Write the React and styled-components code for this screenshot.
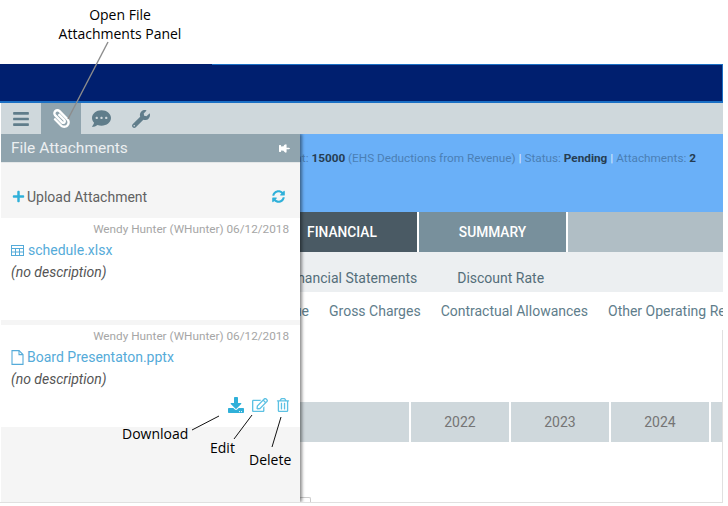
import React from 'react';
import styled, { createGlobalStyle } from 'styled-components';
import {
  FaBars,
  FaPaperclip,
  FaCommentDots,
  FaWrench,
  FaThumbtack,
  FaPlus,
  FaSyncAlt,
  FaDownload,
  FaRegEdit,
  FaRegTrashAlt,
} from 'react-icons/fa';

const GlobalStyle = createGlobalStyle`
  html, body {
    margin: 0;
    padding: 0;
    background: #fff;
    font-family: Roboto, "Liberation Sans", sans-serif;
  }
`;

const Page = styled.div`
  position: relative;
  width: 728px;
  height: 506px;
  overflow: hidden;
  padding-top: 64px;
  box-sizing: border-box;
`;

const Frame = styled.div`
  position: relative;
  width: 723px;
  height: 438px;
  border-bottom: 1px solid #e0e0e0;
  display: flex;
  flex-direction: column;
`;

const NavyBar = styled.div`
  height: 37px;
  flex: none;
  background: #001f6f;
  border-bottom: 2px solid #1a6fc4;
  border-right: 1px solid #1a6fc4;
  background-image: linear-gradient(#1a6fc4, #1a6fc4);
  background-size: 511px 1px;
  background-position: 212px 0;
  background-repeat: no-repeat;
`;

const Toolbar = styled.div`
  height: 31px;
  flex: none;
  display: flex;
  background: #cfd8dc;
  border-left: 1px solid #fff;
`;

const ToolButton = styled.div`
  width: 40px;
  display: flex;
  align-items: center;
  justify-content: center;
  font-size: ${(p) => p.$size || 18}px;
  color: ${(p) => (p.$active ? '#fff' : '#607d8b')};
  background: ${(p) => (p.$active ? '#90a4ae' : 'transparent')};
`;

const ClipIcon = styled(FaPaperclip)`
  transform: scaleX(-1);
`;

const InfoBand = styled.div`
  height: 78px;
  flex: none;
  background: #6ab0f8;
  display: flex;
  justify-content: flex-end;
  padding: 17px 27px 0 0;
  box-sizing: border-box;
  font-size: 11.75px;
  line-height: 14px;
  color: #4a7fb5;
`;

const Strong = styled.b`
  color: #263d52;
  font-weight: 700;
`;

const Pipe = styled.span`
  color: #cfe5fb;
  font-weight: 700;
  margin: 0 3px;
`;

const MainTabs = styled.div`
  height: 40px;
  flex: none;
  display: flex;
  background: #fff;
`;

const MainTab = styled.div`
  flex: ${(p) => (p.$width ? 'none' : '1')};
  width: ${(p) => (p.$width ? `${p.$width}px` : 'auto')};
  margin-right: ${(p) => p.$gap ?? 2}px;
  display: flex;
  align-items: center;
  justify-content: center;
  background: ${(p) => p.$bg};
  color: #fff;
  font-size: 13.75px;
  font-weight: 500;
`;

const SubTabs = styled.div`
  height: 40px;
  flex: none;
  display: flex;
  align-items: center;
  gap: 40px;
  padding: 12px 0 0 286px;
  background: #eceff1;
  color: #546e7a;
  font-size: 14px;
  white-space: nowrap;
  box-sizing: border-box;
`;

const SectionTabs = styled.div`
  height: 38px;
  flex: none;
  display: flex;
  gap: 20px;
  padding-top: 11px;
  box-sizing: border-box;
  color: #607d8b;
  font-size: 14px;
  line-height: 16px;
  white-space: nowrap;
  overflow: hidden;
`;

const EdgeTab = styled.span`
  flex: none;
  width: 309px;
  text-align: right;
`;

const Body = styled.div`
  flex: 1;
  border-right: 1px solid #e0e0e0;
  padding-top: 72px;
  min-height: 0;
`;

const YearRow = styled.div`
  display: flex;
  gap: 2px;
  height: 40px;
`;

const YearCell = styled.div`
  flex: ${(p) => (p.$grow ? '1' : 'none')};
  width: ${(p) => (p.$grow ? 'auto' : `${p.$width || 98}px`)};
  background: #cfd8dc;
  color: #757575;
  font-size: 14px;
  display: flex;
  align-items: center;
  justify-content: center;
`;

const CheckBox = styled.div`
  position: absolute;
  left: 299px;
  bottom: 0;
  width: 10px;
  height: 4px;
  border: 1px solid #ccc;
  border-bottom: none;
  border-radius: 2px 2px 0 0;
`;

const Panel = styled.aside`
  position: absolute;
  left: 0;
  top: 70px;
  bottom: 0;
  width: 299px;
  border-left: 1px solid #fff;
  background: #f5f5f5;
  box-shadow: 2px 0 3px rgba(0, 0, 0, 0.45);
  clip-path: inset(0 -6px 0 0);
  display: flex;
  flex-direction: column;
`;

const PanelHeader = styled.div`
  height: 29px;
  flex: none;
  background: #90a4ae;
  color: #eceff1;
  display: flex;
  align-items: center;
  justify-content: space-between;
  padding: 0 10px;
  box-sizing: border-box;
  font-size: 15.5px;
  border-bottom: 1px solid #e4e7e8;
`;

const PinIcon = styled(FaThumbtack)`
  transform: rotate(-90deg);
  font-size: 11px;
  color: #fff;
`;

const UploadRow = styled.div`
  height: 55px;
  flex: none;
  display: flex;
  align-items: center;
  justify-content: space-between;
  padding: 14px 15px 2px 11px;
  box-sizing: border-box;
  color: #616161;
  font-size: 14px;
`;

const UploadLabel = styled.span`
  display: flex;
  align-items: center;
  gap: 2px;
`;

const Accent = styled.span`
  display: inline-flex;
  color: ${(p) => (p.$light ? '#5cc1e3' : '#2fb0d9')};
  font-size: ${(p) => p.$size || 12}px;
`;

const AttachmentCard = styled.div`
  height: 102px;
  flex: none;
  margin-bottom: 5px;
  background: #fff;
  padding: 4px 11px 0 10px;
  box-sizing: border-box;
  position: relative;
`;

const CardMeta = styled.div`
  text-align: right;
  color: #a6a6a6;
  font-size: 11.75px;
  line-height: 15px;
`;

const FileLink = styled.div`
  display: flex;
  align-items: center;
  gap: ${(p) => p.$gap}px;
  margin-top: 3px;
  color: #55abd9;
  font-size: 14px;
  line-height: 20px;
`;

const Description = styled.div`
  margin-top: 2px;
  font-style: italic;
  color: #555;
  font-size: 14px;
  line-height: 20px;
`;

const CardActions = styled.div`
  position: absolute;
  right: 10px;
  bottom: 14px;
  display: flex;
  align-items: center;
  gap: 8px;
`;

const CalloutLines = styled.svg`
  position: absolute;
  left: 0;
  top: 0;
  pointer-events: none;
`;

const Callout = styled.div`
  position: absolute;
  left: ${(p) => p.$x}px;
  top: ${(p) => p.$y}px;
  width: ${(p) => p.$width || 'auto'};
  text-align: center;
  font-family: "Open Sans", "Noto Sans", sans-serif;
  font-size: 14px;
  line-height: 19px;
  color: #000;
  white-space: nowrap;
`;

const FileIcon = () => (
  <svg width="13" height="15" viewBox="0 0 13 15" fill="none" stroke="currentColor" strokeWidth="1.1">
    <path d="M1 .6h7l4 4v9.8H1z" />
    <path d="M8 .6v4h4" />
  </svg>
);

const TableIcon = () => (
  <svg width="13" height="11" viewBox="0 0 13 11" fill="none" stroke="currentColor">
    <rect x=".5" y=".5" width="12" height="10" />
    <path d="M.5 3.5h12M.5 7h12M4.5 3.5V10.5M8.5 3.5V10.5" />
  </svg>
);

export default function App() {
  return (
    <>
      <GlobalStyle />
      <Page>
        <Frame>
          <NavyBar />
          <Toolbar>
            <ToolButton $size={18}><FaBars /></ToolButton>
            <ToolButton $active $size={19}><ClipIcon /></ToolButton>
            <ToolButton $size={19}><FaCommentDots /></ToolButton>
            <ToolButton $size={18}><FaWrench /></ToolButton>
          </Toolbar>
          <InfoBand>
            <span>
              Amount: <Strong>15000</Strong> (EHS Deductions from Revenue)<Pipe>|</Pipe>Status: <Strong>Pending</Strong><Pipe>|</Pipe>Attachments: <Strong>2</Strong>
            </span>
          </InfoBand>
          <MainTabs>
            <MainTab $width={267} $gap={0} $bg="#4a5a64" />
            <MainTab $width={150} $bg="#4a5a64">FINANCIAL</MainTab>
            <MainTab $width={147} $bg="#78909c">SUMMARY</MainTab>
            <MainTab $gap={0} $bg="#b0bec5" />
          </MainTabs>
          <SubTabs>
            <span>Financial Statements</span>
            <span>Discount Rate</span>
          </SubTabs>
          <SectionTabs>
            <EdgeTab>Revenue</EdgeTab>
            <span>Gross Charges</span>
            <span>Contractual Allowances</span>
            <span>Other Operating Revenue</span>
          </SectionTabs>
          <Body>
            <YearRow>
              <YearCell $width={409}></YearCell>
              <YearCell>2022</YearCell>
              <YearCell>2023</YearCell>
              <YearCell>2024</YearCell>
              <YearCell $grow></YearCell>
            </YearRow>
          </Body>
          <CheckBox />
          <Panel>
            <PanelHeader>
              <span>File Attachments</span>
              <PinIcon />
            </PanelHeader>
            <UploadRow>
              <UploadLabel>
                <Accent $size={13}><FaPlus /></Accent>
                Upload Attachment
              </UploadLabel>
              <Accent $size={13}><FaSyncAlt /></Accent>
            </UploadRow>
            <AttachmentCard>
              <CardMeta>Wendy Hunter (WHunter) 06/12/2018</CardMeta>
              <FileLink $gap={4}>
                <TableIcon />
                schedule.xlsx
              </FileLink>
              <Description>(no description)</Description>
            </AttachmentCard>
            <AttachmentCard>
              <CardMeta>Wendy Hunter (WHunter) 06/12/2018</CardMeta>
              <FileLink $gap={3}>
                <FileIcon />
                Board Presentaton.pptx
              </FileLink>
              <Description>(no description)</Description>
              <CardActions>
                <Accent $size={16}><FaDownload /></Accent>
                <Accent $size={16} $light><FaRegEdit /></Accent>
                <Accent $size={14} $light><FaRegTrashAlt /></Accent>
              </CardActions>
            </AttachmentCard>
          </Panel>
        </Frame>
        <CalloutLines width="728" height="506">
          <line x1="108" y1="42" x2="68" y2="119" stroke="#8c8c8c" strokeWidth="1.4" />
          <line x1="192" y1="430" x2="219" y2="416" stroke="#111" />
          <line x1="234" y1="439" x2="252" y2="415" stroke="#111" />
          <line x1="272" y1="447" x2="281" y2="417" stroke="#111" />
        </CalloutLines>
        <Callout $x={58} $y={5} $width="124px">Open File<br />Attachments Panel</Callout>
        <Callout $x={122} $y={424}>Download</Callout>
        <Callout $x={210} $y={438}>Edit</Callout>
        <Callout $x={249} $y={450}>Delete</Callout>
      </Page>
    </>
  );
}
